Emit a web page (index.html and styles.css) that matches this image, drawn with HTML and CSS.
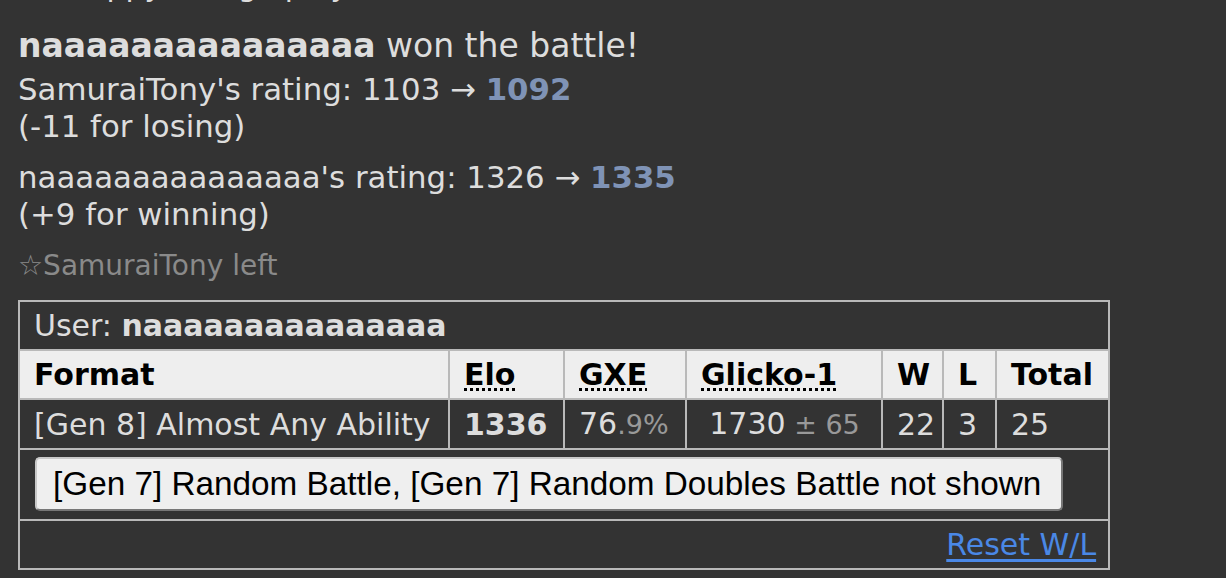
FILE: index.html
```html
<!DOCTYPE html>
<html>
<head>
<meta charset="utf-8">
<link rel="stylesheet" href="styles.css">
</head>
<body>
<div class="log">
  <div class="cut">Go happy and go play</div>
  <div class="win"><strong>naaaaaaaaaaaaaaa</strong> won the battle!</div>
  <div class="rating">SamuraiTony's rating: 1103 &rarr; <strong class="new">1092</strong><br>(-11 for losing)</div>
  <div class="rating second">naaaaaaaaaaaaaaa's rating: 1326 &rarr; <strong class="new">1335</strong><br>(+9 for winning)</div>
  <div class="left">&#9734;SamuraiTony left</div>
  <table class="ladder">
    <colgroup>
      <col class="c-format"><col class="c-elo"><col class="c-gxe"><col class="c-glicko"><col class="c-w"><col class="c-l"><col class="c-total">
    </colgroup>
    <tr class="user-row"><td colspan="7">User: <strong>naaaaaaaaaaaaaaa</strong></td></tr>
    <tr class="head">
      <th>Format</th>
      <th><abbr>Elo</abbr></th>
      <th><abbr>GXE</abbr></th>
      <th><abbr>Glicko-1</abbr></th>
      <th>W</th>
      <th>L</th>
      <th>Total</th>
    </tr>
    <tr class="data">
      <td>[Gen 8] Almost Any Ability</td>
      <td><strong>1336</strong></td>
      <td>76<small>.9%</small></td>
      <td class="center">1730<small> &plusmn; 65</small></td>
      <td>22</td>
      <td>3</td>
      <td>25</td>
    </tr>
    <tr class="btn-row"><td colspan="7"><button class="hidden-btn">[Gen 7] Random Battle, [Gen 7] Random Doubles Battle not shown</button></td></tr>
    <tr class="reset-row"><td colspan="7"><a class="reset" href="#">Reset W/L</a></td></tr>
  </table>
</div>
</body>
</html>
```

FILE: styles.css
```css
html, body {
  margin: 0;
  padding: 0;
  background: #333333;
  overflow: hidden;
}

.log {
  padding-left: 18px;
  font-family: "DejaVu Sans", Verdana, sans-serif;
  color: #dddddd;
  font-size: 30px;
}

.cut {
  margin-top: -33px;
  line-height: 37px;
}

.win {
  margin-top: 22px;
  font-size: 33px;
  line-height: 40px;
}

.rating {
  margin-top: 5px;
  font-size: 30.8px;
  line-height: 37px;
}

.rating.second {
  margin-top: 14px;
}

.new {
  color: #7f93b6;
}

.left {
  margin-top: 16px;
  font-size: 28px;
  line-height: 34px;
  color: #8a8a8a;
}

.ladder {
  margin-top: 17px;
  border-collapse: collapse;
  table-layout: fixed;
  width: 1090px;
  border: 2px solid #b9b9b9;
  font-size: 30px;
}

.c-format { width: 430px; }
.c-elo { width: 115px; }
.c-gxe { width: 122px; }
.c-glicko { width: 196px; }
.c-w { width: 61px; }
.c-l { width: 53px; }
.c-total { width: 113px; }

.ladder td, .ladder th {
  border: 2px solid #b9b9b9;
  padding: 0 13px 0 14px;
  line-height: 47px;
  text-align: left;
  white-space: nowrap;
}

.head th {
  background: #eeeeee;
  color: #000000;
  font-weight: bold;
}

abbr {
  text-decoration: underline dotted;
  text-underline-offset: 3px;
}

.data td {
  color: #dddddd;
}

.data small {
  font-size: 27px;
  color: #999999;
}

.data .center {
  text-align: center;
}

.btn-row td {
  padding: 7px 12px 8px 14px;
  line-height: normal;
}

.hidden-btn {
  margin: 0 0 0 1px;
  height: 54px;
  padding: 0 20px 0 16px;
  font-family: "Liberation Sans", Arial, sans-serif;
  font-size: 33.3px;
  color: #000000;
  background: #efefef;
  border: 2px solid #c8c8c8;
  border-right-color: #777777;
  border-bottom-color: #777777;
  border-radius: 5px;
}

.reset-row td {
  text-align: right;
  padding-right: 12px;
}

.reset {
  color: #4a88e6;
  text-decoration: underline;
  text-underline-offset: 4px;
}
```
